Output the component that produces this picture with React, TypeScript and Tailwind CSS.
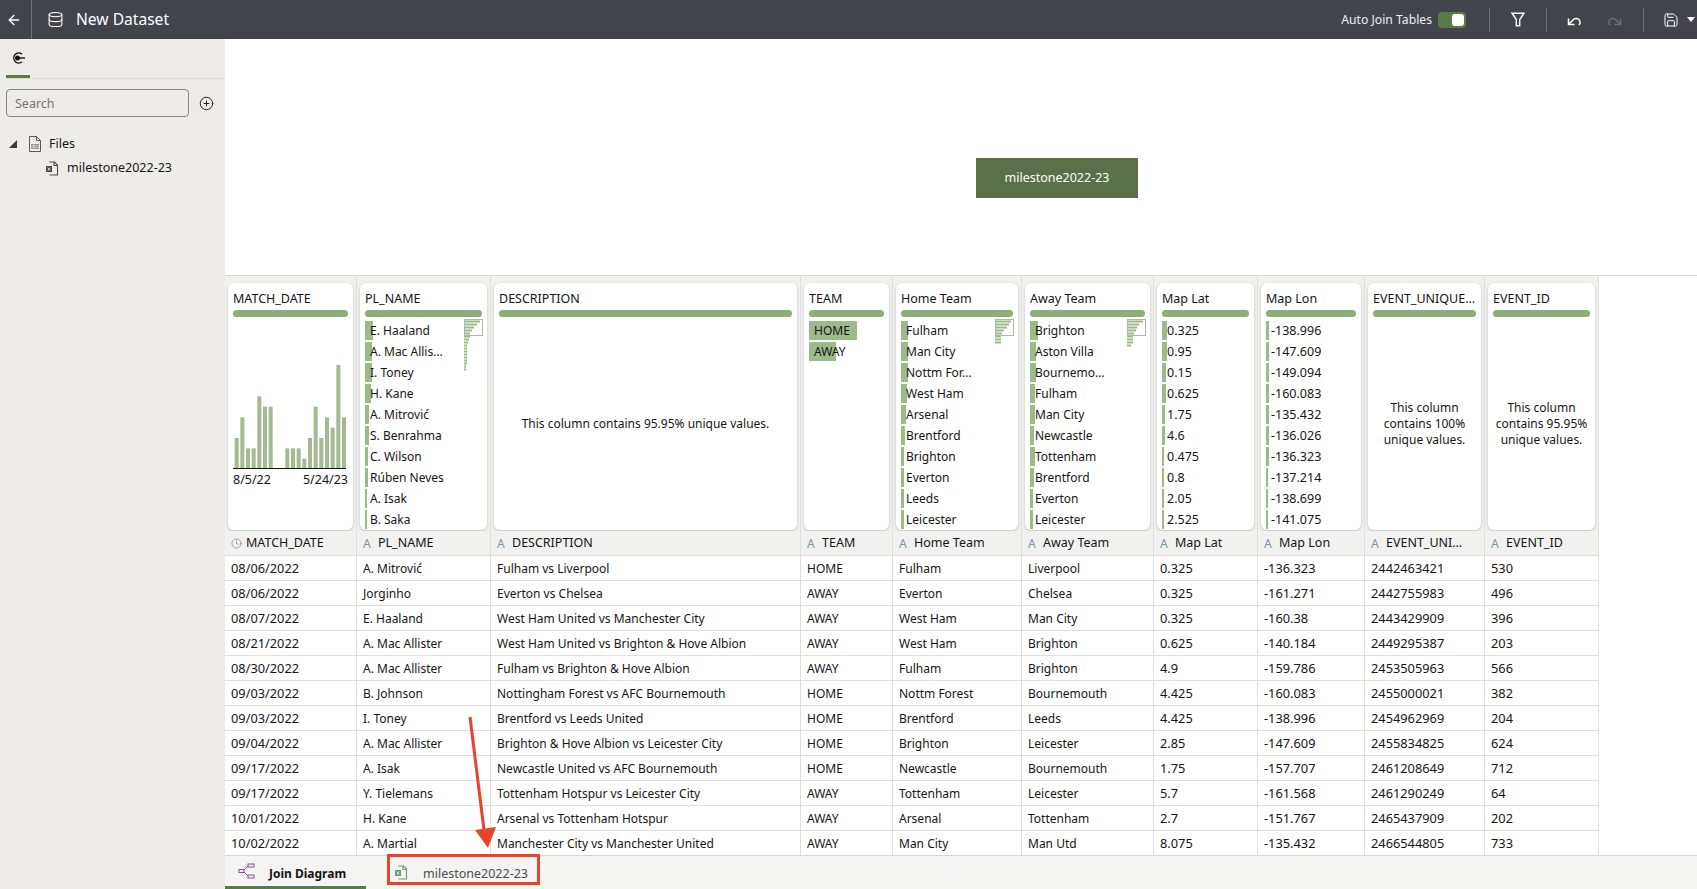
import React from "react";
import { ArrowLeft, Database, Save, CirclePlus, Clock } from "lucide-react";

const grid = "grid grid-cols-[132px_134px_310px_92px_129px_132px_104px_107px_120px_114px] w-[1374px]";

type Col = { title: string; head: string; rows?: [string, number][]; unique?: string; hist?: boolean; mini?: number[]; num?: boolean };

const names = (l: string[], w: number[]): [string, number][] => l.map((s, i) => [s, w[i]]);

const cols: Col[] = [
  { title: "MATCH_DATE", head: "MATCH_DATE", hist: true },
  { title: "PL_NAME", head: "PL_NAME", rows: names(["E. Haaland", "A. Mac Allis…", "I. Toney", "H. Kane", "A. Mitrović", "S. Benrahma", "C. Wilson", "Rúben Neves", "A. Isak", "B. Saka"], [8, 7, 6.5, 6, 4, 4, 3, 3, 2, 2]), mini: [16, 13, 10, 8, 6, 6, 5, 4, 3, 3, 3, 3, 3, 3, 3, 2, 2] },
  { title: "DESCRIPTION", head: "DESCRIPTION", unique: "This column contains 95.95% unique values." },
  { title: "TEAM", head: "TEAM", rows: names(["HOME", "AWAY"], [48, 27]) },
  { title: "Home Team", head: "Home Team", rows: names(["Fulham", "Man City", "Nottm For…", "West Ham", "Arsenal", "Brentford", "Brighton", "Everton", "Leeds", "Leicester"], [7, 7, 7, 6, 5, 4, 3, 3, 3, 3]), mini: [16, 14, 12, 9, 7, 6, 6, 6] },
  { title: "Away Team", head: "Away Team", rows: names(["Brighton", "Aston Villa", "Bournemo…", "Fulham", "Man City", "Newcastle", "Tottenham", "Brentford", "Everton", "Leicester"], [8, 6, 6, 5, 5, 4, 5, 4, 3, 3]), mini: [16, 12, 10, 9, 7, 6, 6, 6, 4] },
  { title: "Map Lat", head: "Map Lat", num: true, rows: names(["0.325", "0.95", "0.15", "0.625", "1.75", "4.6", "0.475", "0.8", "2.05", "2.525"], [5, 5, 4, 4, 3, 3, 2, 2, 2, 2]) },
  { title: "Map Lon", head: "Map Lon", num: true, rows: names(["-138.996", "-147.609", "-149.094", "-160.083", "-135.432", "-136.026", "-136.323", "-137.214", "-138.699", "-141.075"], [3, 3, 3, 3, 3, 3, 3, 2, 2, 2]) },
  { title: "EVENT_UNIQUE…", head: "EVENT_UNI…", unique: "This column contains 100% unique values." },
  { title: "EVENT_ID", head: "EVENT_ID", unique: "This column contains 95.95% unique values." },
];

const numeric = [true, false, false, false, false, false, true, true, true, true];

const data = [
  ["08/06/2022", "A. Mitrović", "Fulham vs Liverpool", "HOME", "Fulham", "Liverpool", "0.325", "-136.323", "2442463421", "530"],
  ["08/06/2022", "Jorginho", "Everton vs Chelsea", "AWAY", "Everton", "Chelsea", "0.325", "-161.271", "2442755983", "496"],
  ["08/07/2022", "E. Haaland", "West Ham United vs Manchester City", "AWAY", "West Ham", "Man City", "0.325", "-160.38", "2443429909", "396"],
  ["08/21/2022", "A. Mac Allister", "West Ham United vs Brighton & Hove Albion", "AWAY", "West Ham", "Brighton", "0.625", "-140.184", "2449295387", "203"],
  ["08/30/2022", "A. Mac Allister", "Fulham vs Brighton & Hove Albion", "AWAY", "Fulham", "Brighton", "4.9", "-159.786", "2453505963", "566"],
  ["09/03/2022", "B. Johnson", "Nottingham Forest vs AFC Bournemouth", "HOME", "Nottm Forest", "Bournemouth", "4.425", "-160.083", "2455000021", "382"],
  ["09/03/2022", "I. Toney", "Brentford vs Leeds United", "HOME", "Brentford", "Leeds", "4.425", "-138.996", "2454962969", "204"],
  ["09/04/2022", "A. Mac Allister", "Brighton & Hove Albion vs Leicester City", "HOME", "Brighton", "Leicester", "2.85", "-147.609", "2455834825", "624"],
  ["09/17/2022", "A. Isak", "Newcastle United vs AFC Bournemouth", "HOME", "Newcastle", "Bournemouth", "1.75", "-157.707", "2461208649", "712"],
  ["09/17/2022", "Y. Tielemans", "Tottenham Hotspur vs Leicester City", "AWAY", "Tottenham", "Leicester", "5.7", "-161.568", "2461290249", "64"],
  ["10/01/2022", "H. Kane", "Arsenal vs Tottenham Hotspur", "AWAY", "Arsenal", "Tottenham", "2.7", "-151.767", "2465437909", "202"],
  ["10/02/2022", "A. Martial", "Manchester City vs Manchester United", "AWAY", "Man City", "Man Utd", "8.075", "-135.432", "2466544805", "733"],
];

function Histogram() {
  const bars: [number, number][] = [[32, 491], [49, 429], [66, 522], [83, 522], [100, 366], [117, 397], [134, 397], [184, 522], [201, 522], [218, 522], [235, 553], [252, 491], [269, 397], [286, 491], [303, 429], [320, 460], [337, 272], [354, 429]];
  return (
    <div className="flex flex-1 flex-col justify-end pb-[42px]">
      <svg width="115" height="112" viewBox="0 0 115 112" className="block shrink-0">
        {bars.map(([x, top], i) => (
          <rect key={i} x={x / 3 - 9} y={(top - 272) / 3 + 8} width="4" height={(582 - top) / 3} fill="#a3bb92" />
        ))}
        <rect x="0" y="111" width="113" height="1" fill="#161513" />
      </svg>
      <div className="mt-[2px] flex justify-between text-[12.500px] leading-[17px]">
        <span>8/5/22</span>
        <span>5/24/23</span>
      </div>
    </div>
  );
}

function Mini({ bars }: { bars: number[] }) {
  return (
    <svg width="20" height={bars.length * 3 + 4} className="absolute right-[-2px] top-[-2px]">
      {bars.map((w, i) => (
        <rect key={i} x="0" y={i * 3 + 1.500} width={w} height="2" fill="#9dba8a" />
      ))}
      <rect x="0.5" y="0.5" width="18" height="16" fill="none" stroke="#b4b4b2" />
    </svg>
  );
}

function Card({ c }: { c: Col }) {
  return (
    <div className="border-r border-[#dfdfdd] px-[3px] pt-[7px]">
      <div className="flex h-[247px] flex-col overflow-hidden rounded-[6px] bg-white px-[5px] shadow-[0_1px_3px_rgba(0,0,0,0.22)]">
        <div className="truncate pt-[7px] text-[12.500px] leading-[18px]">{c.title}</div>
        <div className="mt-[2px] h-[7px] shrink-0 rounded-full bg-[#8cae78]" />
        {c.hist && <Histogram />}
        {c.unique && <div className="flex flex-1 items-center justify-center text-center leading-[16px]">{c.unique}</div>}
        {c.rows && (
          <div className="relative mt-[4px] flex flex-col gap-[2px]">
            {c.rows.map(([t, w]) => (
              <div key={t} className="relative h-[19px] shrink-0">
                <div className="absolute bottom-0 left-0 top-0 bg-[#9dba8a]" style={{ width: w }} />
                <span className={(c.num ? "text-[12.500px] " : "") + "relative block truncate pl-[5px] leading-[19px]"}>{t}</span>
              </div>
            ))}
            {c.mini && <Mini bars={c.mini} />}
          </div>
        )}
      </div>
    </div>
  );
}

function DocIcon() {
  return (
    <svg width="14" height="16" viewBox="0 0 14 16" fill="none" stroke="#5b5a57" strokeWidth="1">
      <path d="M1.5.5h7l4 4v11h-11z" />
      <path d="M8.5.5v4h4" />
      <rect x="3" y="8" width="8" height="5" fill="#8e8d8a" stroke="none" />
      <path d="M3 9.7h8M3 11.3h8M6 8v5" stroke="#f0efeb" strokeWidth="0.6" />
    </svg>
  );
}

function XlsIcon({ color }: { color: string }) {
  return (
    <svg width="14" height="15" viewBox="0 0 14 15" fill="none" stroke={color} strokeWidth="1.1">
      <path d="M4.5 1h5l3 3v10h-8" />
      <path d="M9 1v3.500h3.500" />
      <rect x="1" y="5" width="6" height="6" fill={color} stroke="none" />
      <path d="M2.800 6.500l2.400 3M5.200 6.500l-2.400 3" stroke="#f2f2f0" strokeWidth="0.8" />
    </svg>
  );
}

function UndoIcon({ className, flip }: { className: string; flip?: boolean }) {
  return (
    <svg width="15" height="12" viewBox="0 0 15 12" fill="none" stroke="currentColor" strokeWidth="1.500" className={className} style={flip ? { transform: "scaleX(-1)" } : undefined}>
      <path d="M1.500 4.500v6h6" />
      <path d="M1.500 10.500L6 6a4 4 0 0 1 7 1.500c.4 1.500-.3 2.800-1.200 3.500" />
    </svg>
  );
}

export default function App() {
  return (
    <div className="relative flex h-screen flex-col overflow-hidden bg-white font-['Noto_Sans','Open_Sans',sans-serif] text-[12px] text-[#161513]">
      <header className="flex h-[39px] shrink-0 items-center bg-[#41444a] text-white">
        <div className="flex h-full w-[32px] items-center justify-center border-r border-[#6f7277] pr-[4px]">
          <ArrowLeft size={16} strokeWidth={2} />
        </div>
        <Database size={17} strokeWidth={1.5} className="ml-[15px]" />
        <span className="ml-[12px] pt-[1px] text-[15.600px]">New Dataset</span>
        <div className="ml-auto flex h-full items-center">
          <span className="pt-[2px] text-[12.200px] text-[#eeeeee]">Auto Join Tables</span>
          <div className="ml-[6px] flex h-[16px] w-[28px] items-center justify-end rounded-[4px] bg-[#5c7a45] pr-[2px]">
            <div className="h-[12px] w-[12px] rounded-[3px] bg-white" />
          </div>
          <div className="ml-[23px] h-[24px] w-px bg-[#6f7277]" />
          <svg width="14" height="15" viewBox="0 0 14 15" fill="none" stroke="currentColor" strokeWidth="1.400" className="ml-[21px]">
            <path d="M1 1.200h12L8.700 7.500v6.300H5.300V7.500z" />
          </svg>
          <div className="ml-[21px] h-[24px] w-px bg-[#6f7277]" />
          <UndoIcon className="ml-[20px]" />
          <UndoIcon flip className="ml-[25px] text-[#6b6e73]" />
          <div className="ml-[21px] h-[24px] w-px bg-[#6f7277]" />
          <Save size={16} strokeWidth={1.5} className="ml-[19px]" />
          <div className="ml-[8px] mr-[2px] h-0 w-0 border-x-[4px] border-t-[5px] border-x-transparent border-t-white" />
        </div>
      </header>

      <div className="flex min-h-0 flex-1">
        <aside className="w-[225px] shrink-0 bg-[#edece8] text-[12.500px]">
          <div className="ml-[6px] h-[40px] border-b border-[#dbdad6]">
            <div className="flex h-[39px] w-[24px] items-center justify-center border-b-[3px] border-[#5c7a45] pt-[1px]">
              <svg width="14" height="14" viewBox="0 0 14 14" fill="none" stroke="#161513" strokeWidth="1.400">
                <path d="M11 3.200A5 5 0 1 0 11 10.800" />
                <circle cx="6.500" cy="7" r="1.800" fill="#161513" />
                <path d="M7 7h7" />
              </svg>
            </div>
          </div>
          <div className="mt-[10px] flex items-center pl-[6px]">
            <div className="flex h-[28px] w-[183px] items-center rounded-[4px] border border-[#85847f] pl-[8px] pt-[2px] text-[#77766f]">Search</div>
            <CirclePlus size={15} strokeWidth={1.5} className="ml-[10px]" />
          </div>
          <div className="mt-[15px] flex h-[24px] items-center">
            <div className="ml-[9px] h-0 w-0 border-b-[8px] border-l-[8px] border-b-[#3a3a38] border-l-transparent" />
            <div className="ml-[11px]"><DocIcon /></div>
            <span className="ml-[7px]">Files</span>
          </div>
          <div className="flex h-[24px] items-center pl-[45px]">
            <XlsIcon color="#4a4a48" />
            <span className="ml-[8px]">milestone2022-23</span>
          </div>
        </aside>

        <main className="flex min-w-0 flex-1 flex-col">
          <section className="relative h-[237px] shrink-0 border-b border-[#d5d5d3] bg-white">
            <div className="absolute left-[751px] top-[119px] flex h-[40px] w-[162px] items-center justify-center bg-[#5a7048] text-[12.500px] text-white">milestone2022-23</div>
          </section>

          <div className="flex min-h-0 flex-1 flex-col overflow-hidden">
            <div className={grid + " h-[255px] shrink-0 bg-[#f1f1f0]"}>
              {cols.map((c) => (
                <Card key={c.title} c={c} />
              ))}
            </div>
            <div className={grid + " h-[25px] shrink-0 border-b border-[#dfdfdd] bg-[#f1f1f0] text-[12.500px]"}>
              {cols.map((c) => (
                <div key={c.head} className="flex items-center overflow-hidden border-r border-[#dfdfdd] pl-[6px] pt-[1px]">
                  {c.hist ? <Clock size={11} strokeWidth={1.500} className="text-[#8b6fae]" /> : <span className="w-[9px] text-[12px] text-[#6f9ab3]">A</span>}
                  <span className={(c.hist ? "ml-[4px]" : "ml-[6px]") + " whitespace-nowrap"}>{c.head}</span>
                </div>
              ))}
            </div>
            {data.map((r, i) => (
              <div key={i} className={grid + " h-[25px] shrink-0 border-b border-[#dfdfdd] bg-white"}>
                {r.map((v, j) => (
                  <div key={j} className={(numeric[j] ? "text-[12.800px] " : "") + "flex items-center overflow-hidden whitespace-nowrap border-r border-[#dfdfdd] pl-[6px] pt-[1px]"}>{v}</div>
                ))}
              </div>
            ))}
          </div>

          <footer className="flex h-[34px] shrink-0 border-t border-[#d5d5d3] bg-[#f4f4f2] text-[12.500px]">
            <div className="flex w-[141px] items-center border-b-[3px] border-[#5c7a45] pl-[13px]">
              <svg width="17" height="16" viewBox="0 0 17 16" fill="none" stroke="#8a4b9a" strokeWidth="1">
                <rect x="10" y="1" width="6" height="3" />
                <rect x="10" y="12" width="6" height="3" />
                <rect x="1" y="6.500" width="5" height="3" />
                <path d="M6 7L10 3M6 9l4 4" />
              </svg>
              <span className="ml-[14px] pt-[5px] text-[12px] font-bold">Join Diagram</span>
            </div>
            <div className="ml-[20px] flex items-center pl-[8px]">
              <XlsIcon color="#6f9c72" />
              <span className="ml-[15px] pt-[4px] text-[#4c4b48]">milestone2022-23</span>
            </div>
          </footer>
        </main>
      </div>

      <div className="pointer-events-none absolute left-[387px] top-[854px] h-[31px] w-[153px] border-[3px] border-[#e5452a]" />
      <svg className="pointer-events-none absolute left-[460px] top-[710px]" width="40" height="142" viewBox="0 0 40 142">
        <path d="M10 7L24 120" stroke="#e5452a" strokeWidth="3" />
        <path d="M28 138L15 120L36 117z" fill="#e5452a" />
      </svg>
    </div>
  );
}
